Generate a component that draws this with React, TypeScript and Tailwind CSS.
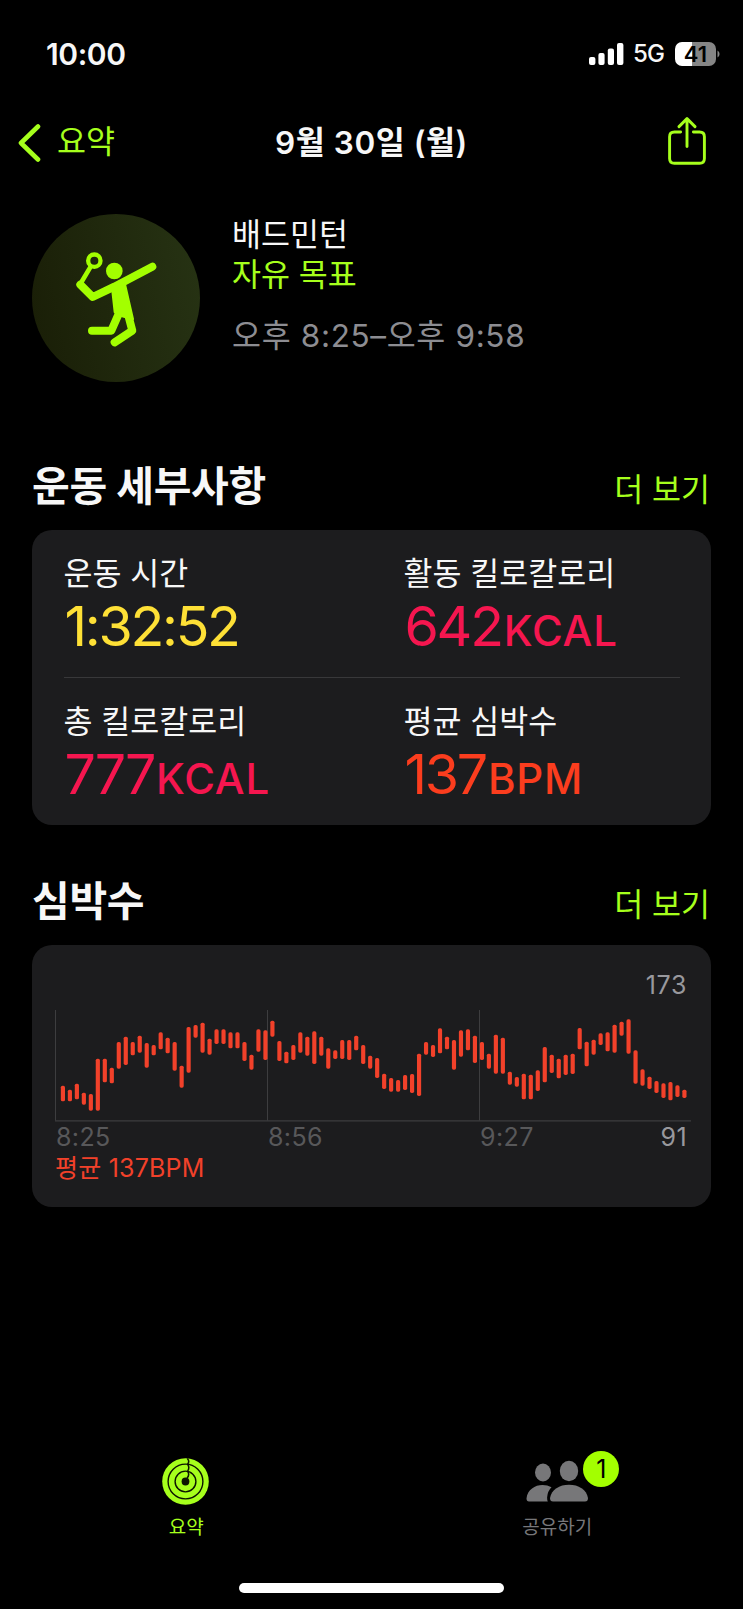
import clsx from 'clsx';

interface Metric {
  label: string;
  value: string;
  unit?: string;
  color: string;
}

const METRICS: Metric[] = [
  { label: '운동 시간', value: '1:32:52', color: 'text-[#fee036]' },
  { label: '활동 킬로칼로리', value: '642', unit: 'KCAL', color: 'text-[#f5164f]' },
  { label: '총 킬로칼로리', value: '777', unit: 'KCAL', color: 'text-[#f5164f]' },
  { label: '평균 심박수', value: '137', unit: 'BPM', color: 'text-[#fb3d1e]' },
];

// [top, bottom] of every heart rate range, one per minute bucket
const HEART_RATE: [number, number][] = [
  [287, 334], [299, 334], [281, 328], [308, 344], [312, 362], [206, 362], [206, 277], [233, 280],
  [156, 236], [140, 225], [156, 196], [137, 188], [159, 233], [165, 196], [127, 178], [143, 190],
  [156, 242], [227, 293], [111, 248], [105, 143], [98, 188], [146, 194], [118, 162], [118, 162],
  [127, 175], [127, 175], [156, 213], [194, 239], [118, 185], [121, 210], [92, 140], [153, 213],
  [185, 220], [165, 210], [127, 188], [140, 197], [124, 222], [140, 197], [175, 236], [181, 207],
  [150, 207], [150, 210], [137, 181], [165, 222], [197, 236], [204, 264], [251, 297], [264, 305],
  [270, 305], [255, 300], [252, 309], [191, 318], [156, 194], [165, 201], [115, 190], [140, 178],
  [150, 239], [121, 200], [118, 181], [137, 219], [156, 210], [191, 236], [134, 251], [143, 251],
  [245, 284], [261, 290], [251, 328], [254, 328], [241, 303], [171, 277], [194, 249], [206, 265],
  [194, 255], [191, 252], [114, 178], [155, 229], [149, 194], [130, 165], [127, 184], [104, 188],
  [95, 137], [88, 191], [181, 281], [238, 287], [260, 297], [273, 309], [280, 324], [276, 331],
  [286, 321], [299, 324],
];

function StatusBar() {
  return (
    <div className="flex h-[108px] items-center justify-between pl-[46px] pr-[23px]">
      <span className="text-[30px] font-semibold leading-none tracking-[-0.4px]">10:00</span>
      <div className="flex items-center">
        <svg className="h-[22px] w-[35px]" viewBox="0 0 35 22" fill="#fff">
          <rect x="0" y="14" width="6.4" height="8" rx="2" />
          <rect x="9.4" y="10" width="6.2" height="12" rx="2" />
          <rect x="18.8" y="5.4" width="6.2" height="16.6" rx="2" />
          <rect x="28" y="0" width="6.4" height="22" rx="2" />
        </svg>
        <span className="ml-[9px] w-[42px] text-[24px] font-medium leading-none tracking-[-0.8px]">5G</span>
        <div className="flex h-6 w-[41px] items-center justify-center rounded-[7px] bg-[linear-gradient(90deg,#fff_42%,#858585_42%)]">
          <span className="text-[22px] font-semibold leading-none tracking-[0.2px] text-black">41</span>
        </div>
        <svg className="ml-px h-2 w-[3px]" viewBox="0 0 3 8" fill="#858585">
          <path d="M0.5 0.5a4 4 0 0 1 0 7Z" />
        </svg>
      </div>
    </div>
  );
}

function NavBar() {
  return (
    <div className="grid h-[70px] grid-cols-[1fr_auto_1fr] items-center px-[18px]">
      <div className="flex items-center text-[#a6ff1c]">
        <svg className="h-[38px] w-[23px]" viewBox="0 0 23 38" fill="none" stroke="currentColor" strokeWidth="4.6" strokeLinecap="round" strokeLinejoin="round">
          <path d="M20 2.5 3 19 20 35.5" />
        </svg>
        <span className="-mt-0.5 ml-[16px] text-[31.5px] leading-none">요약</span>
      </div>
      <h1 className="text-[31.5px] font-semibold leading-none tracking-[0.55px]">9월 30일 (월)</h1>
      <svg className="-mt-1 mr-[19px] h-[48px] w-[38px] justify-self-end" viewBox="0 0 38 48" fill="none" stroke="#a6ff1c" strokeWidth="2.9" strokeLinecap="round" strokeLinejoin="round">
        <path d="M12.6 15H6.4Q1.6 15 1.6 19.8V41.4Q1.6 46.2 6.4 46.2H31.6Q36.4 46.2 36.4 41.4V19.8Q36.4 15 31.6 15H25.4" />
        <path d="M19 29.5V1.8M11 9.6 19 1.6 27 9.6" />
      </svg>
    </div>
  );
}

function BadmintonIcon() {
  return (
    <svg className="h-[168px] w-[168px] flex-shrink-0" viewBox="0 0 504 504">
      <defs>
        <linearGradient id="disc" x1="0" y1="0.6" x2="1" y2="0.4">
          <stop offset="0" stopColor="#1a1f07" />
          <stop offset="1" stopColor="#263213" />
        </linearGradient>
      </defs>
      <circle cx="252" cy="252" r="252" fill="url(#disc)" />
      <g stroke="#a3ff00" strokeLinecap="round" strokeLinejoin="round" fill="none">
        <circle cx="187" cy="140" r="18.5" strokeWidth="13" />
        <path d="M176 158 145 210" strokeWidth="14" />
        <path d="M145 212 182 249 247 218 361 158" strokeWidth="24" />
        <path d="M180 350H238L266 286" strokeWidth="24" />
        <path d="M248 385 301 350 280 270" strokeWidth="24" />
        <path d="M241 222 270 208 279 215 302 315 271 306 249 294Z" fill="#a3ff00" strokeWidth="8" />
      </g>
      <circle cx="247" cy="171" r="25" fill="#a3ff00" />
    </svg>
  );
}

function SectionHeader({ title, className }: { title: string; className: string }) {
  return (
    <div className={clsx('flex h-[44px] items-center justify-between pr-px', className)}>
      <h2 className="text-[41px] font-bold leading-none tracking-[-0.3px]">{title}</h2>
      <a className="mt-2 text-[31.5px] leading-none text-[#a6ff1c]">더 보기</a>
    </div>
  );
}

function MetricCell({ label, value, unit, color }: Metric) {
  return (
    <div className="h-[147px] pt-[26px]">
      <p className="h-[36px] text-[31.5px] leading-[36px]">{label}</p>
      <p className={clsx('mt-[5px] h-[58px] pl-px text-[55.5px] leading-[58px] tracking-[-2.3px]', color)}>
        {value}
        {unit && <span className="ml-[2px] text-[42px] font-medium tracking-[0.8px]">{unit}</span>}
      </p>
    </div>
  );
}

function HeartRateChart() {
  return (
    <svg className="h-[112px] w-[638px]" viewBox="0 60 1914 336">
      <g stroke="#3d3d3f" strokeWidth="3" fill="none">
        <path d="M1.5 60V392M637.5 60V392M1273.5 60V392" />
        <path d="M0 392.5H1908" strokeWidth="4" />
      </g>
      {HEART_RATE.map(([top, bottom], i) => (
        <rect key={i} x={17.5 + i * 20.95} y={top} width="12.5" height={bottom - top} rx="5" fill="#f2412a" />
      ))}
    </svg>
  );
}

function TabBar() {
  return (
    <nav className="grid h-[96px] grid-cols-2">
      <div className="flex flex-col items-center text-[#a6ff1c]">
        <svg className="mt-[5px] h-[47px] w-[47px]" viewBox="0 0 47 47" fill="none">
          <circle cx="23.5" cy="23.5" r="23.3" fill="currentColor" />
          <circle cx="23.5" cy="23.5" r="17.4" stroke="#0c1400" strokeWidth="1.4" />
          <circle cx="23.5" cy="23.5" r="10.4" stroke="#0c1400" strokeWidth="1.4" />
          <circle cx="23.5" cy="23.5" r="3.9" fill="#0c1400" />
          <path d="M25.3 0.5Q28 3.3 25.6 6.2M25.6 6.2Q28 10 25.6 13M25.6 13Q28 17 25 20" stroke="#0c1400" strokeWidth="1.5" />
        </svg>
        <span className="mt-[13px] pl-px text-[19px] leading-none">요약</span>
      </div>
      <div className="flex flex-col items-center text-[#77777a]">
        <div className="relative mt-[7px] h-[44px] w-[62px]">
          <svg className="h-[44px] w-[62px]" viewBox="0 0 62 44" fill="#777779">
            <ellipse cx="17" cy="12.5" rx="8" ry="9" />
            <path d="M25.5 27.2Q21.5 31 21.1 37.5Q21 39.5 21.8 41.5H3Q0.5 41.5 0.5 38.5C1.5 29.5 9 25 16.5 25Q21.5 25 25.5 27.2Z" />
            <ellipse cx="43" cy="11" rx="9.2" ry="10.2" />
            <path d="M24 38C25.5 29.5 33.5 24.8 43 24.8S60.5 29.5 62 38Q62 41.5 59 41.5H27Q24 41.5 24 38Z" />
          </svg>
          <span className="absolute left-[57px] top-[-9px] flex h-[36px] w-[36px] items-center justify-center rounded-full bg-[#a3ff00] text-[25px] leading-none text-black">
            1
          </span>
        </div>
        <span className="mt-[14px] text-[19px] leading-none">공유하기</span>
      </div>
    </nav>
  );
}

export default function App() {
  return (
    <div className="flex h-[1609px] w-[743px] flex-col overflow-hidden bg-black font-['Inter','Noto_Sans_CJK_KR',sans-serif] text-[#f7f7f7]">
      <StatusBar />
      <NavBar />

      <main className="flex-1 px-8">
        <section className="mt-[36px] flex h-[168px]">
          <BadmintonIcon />
          <div className="ml-[32px] pt-px text-[31.5px] leading-[40px]">
            <p>배드민턴</p>
            <p className="text-[#a6ff1c]">자유 목표</p>
            <p className="mt-[21px] tracking-[0.65px] text-[#8d8d92]">오후 8:25–오후 9:58</p>
          </div>
        </section>

        <SectionHeader title="운동 세부사항" className="mt-[82px]" />
        <section className="relative mt-[22px] grid h-[295px] grid-cols-[340px_1fr] rounded-[20px] bg-[#1c1c1e] pl-[31.5px]">
          {METRICS.map((metric) => (
            <MetricCell key={metric.label} {...metric} />
          ))}
          <div className="absolute left-8 right-[31px] top-[147px] h-px bg-[#38383a]" />
        </section>

        <SectionHeader title="심박수" className="mt-[54px]" />
        <section className="mt-[22px] h-[262px] rounded-[20px] bg-[#1c1c1e] pl-[23px] pr-[18px] pt-[25px] text-[25px] leading-[30px]">
          <p className="pr-[6px] text-right tracking-[0.6px] text-[#98989d]">173</p>
          <div className="mt-[10px]">
            <HeartRateChart />
          </div>
          <div className="grid h-[31px] grid-cols-[212px_212px_1fr_auto] pl-px pr-[6px] tracking-[0.4px] text-[#58585a]">
            <span>8:25</span>
            <span>8:56</span>
            <span>9:27</span>
            <span className="text-[#98989d]">91</span>
          </div>
          <p className="tracking-[0.2px] text-[#f2412a]">평균 137BPM</p>
        </section>
      </main>

      <TabBar />
      <div className="mx-auto mb-[16px] mt-[34px] h-[10px] w-[265px] rounded-full bg-white" />
    </div>
  );
}
